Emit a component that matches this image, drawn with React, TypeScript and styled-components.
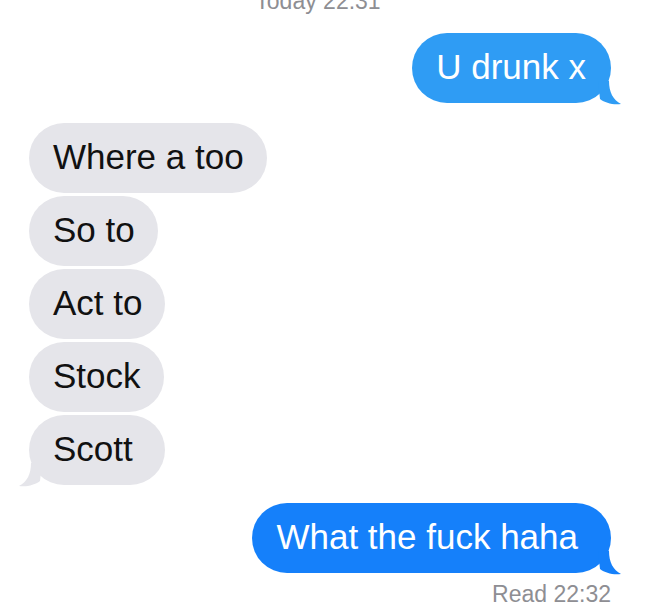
import React from 'react';
import styled, { createGlobalStyle } from 'styled-components';

const GlobalStyle = createGlobalStyle`
  html, body {
    margin: 0;
    padding: 0;
    background: #ffffff;
  }
  body {
    font-family: 'Liberation Sans', Arial, sans-serif;
  }
`;

const Screen = styled.div`
  width: 650px;
  height: 612px;
  overflow: hidden;
  background: #ffffff;
  display: flex;
  flex-direction: column;
  padding: 0 39px 0 29px;
  box-sizing: border-box;
`;

const DateHeader = styled.div`
  margin-top: -11px;
  text-align: center;
  font-size: 23px;
  line-height: 24px;
  color: #8e8e93;
  padding-right: 4px;
`;

const Group = styled.div<{ $side: 'left' | 'right'; $top: number }>`
  display: flex;
  flex-direction: column;
  align-items: ${(p) => (p.$side === 'right' ? 'flex-end' : 'flex-start')};
  gap: 3px;
  margin-top: ${(p) => p.$top}px;
`;

const Bubble = styled.div<{ $side: 'left' | 'right'; $bg: string; $padEnd: number }>`
  position: relative;
  height: 70px;
  display: flex;
  align-items: center;
  padding: 0 ${(p) => p.$padEnd}px 2px 24px;
  box-sizing: border-box;
  border-radius: 35px;
  background: ${(p) => p.$bg};
  color: ${(p) => (p.$side === 'right' ? '#ffffff' : '#111111')};
  font-size: 35px;
  white-space: nowrap;
`;

const Tail = styled.svg<{ $side: 'left' | 'right' }>`
  position: absolute;
  bottom: -2px;
  width: 24px;
  height: 24px;
  ${(p) => (p.$side === 'right' ? 'right: -11px;' : 'left: -11px; transform: scaleX(-1);')}
`;

const ReadReceipt = styled.div`
  align-self: flex-end;
  margin-top: 8px;
  font-size: 23px;
  color: #8e8e93;
`;

type Msg = { text: string; tail?: boolean; padEnd?: number };

function Message({ side, bg, msg }: { side: 'left' | 'right'; bg: string; msg: Msg }) {
  return (
    <Bubble $side={side} $bg={bg} $padEnd={msg.padEnd ?? 23}>
      {msg.text}
      {msg.tail && (
        <Tail $side={side} viewBox="0 0 24 24">
          <path d="M0 0 L11 0 C11 11 15 19 23 23 C15 24 7 22 2 18 Z" fill={bg} />
        </Tail>
      )}
    </Bubble>
  );
}

const incoming: Msg[] = [
  { text: 'Where a too' },
  { text: 'So to' },
  { text: 'Act to' },
  { text: 'Stock' },
  { text: 'Scott', tail: true, padEnd: 32 },
];

export default function App() {
  return (
    <>
      <GlobalStyle />
      <Screen>
        <DateHeader>Today 22:31</DateHeader>
        <Group $side="right" $top={20}>
          <Message side="right" bg="#2f9cf4" msg={{ text: 'U drunk x', tail: true, padEnd: 25 }} />
        </Group>
        <Group $side="left" $top={20}>
          {incoming.map((m) => (
            <Message key={m.text} side="left" bg="#e5e5ea" msg={m} />
          ))}
        </Group>
        <Group $side="right" $top={18}>
          <Message side="right" bg="#1580fa" msg={{ text: 'What the fuck haha', tail: true, padEnd: 33 }} />
        </Group>
        <ReadReceipt>Read 22:32</ReadReceipt>
      </Screen>
    </>
  );
}
